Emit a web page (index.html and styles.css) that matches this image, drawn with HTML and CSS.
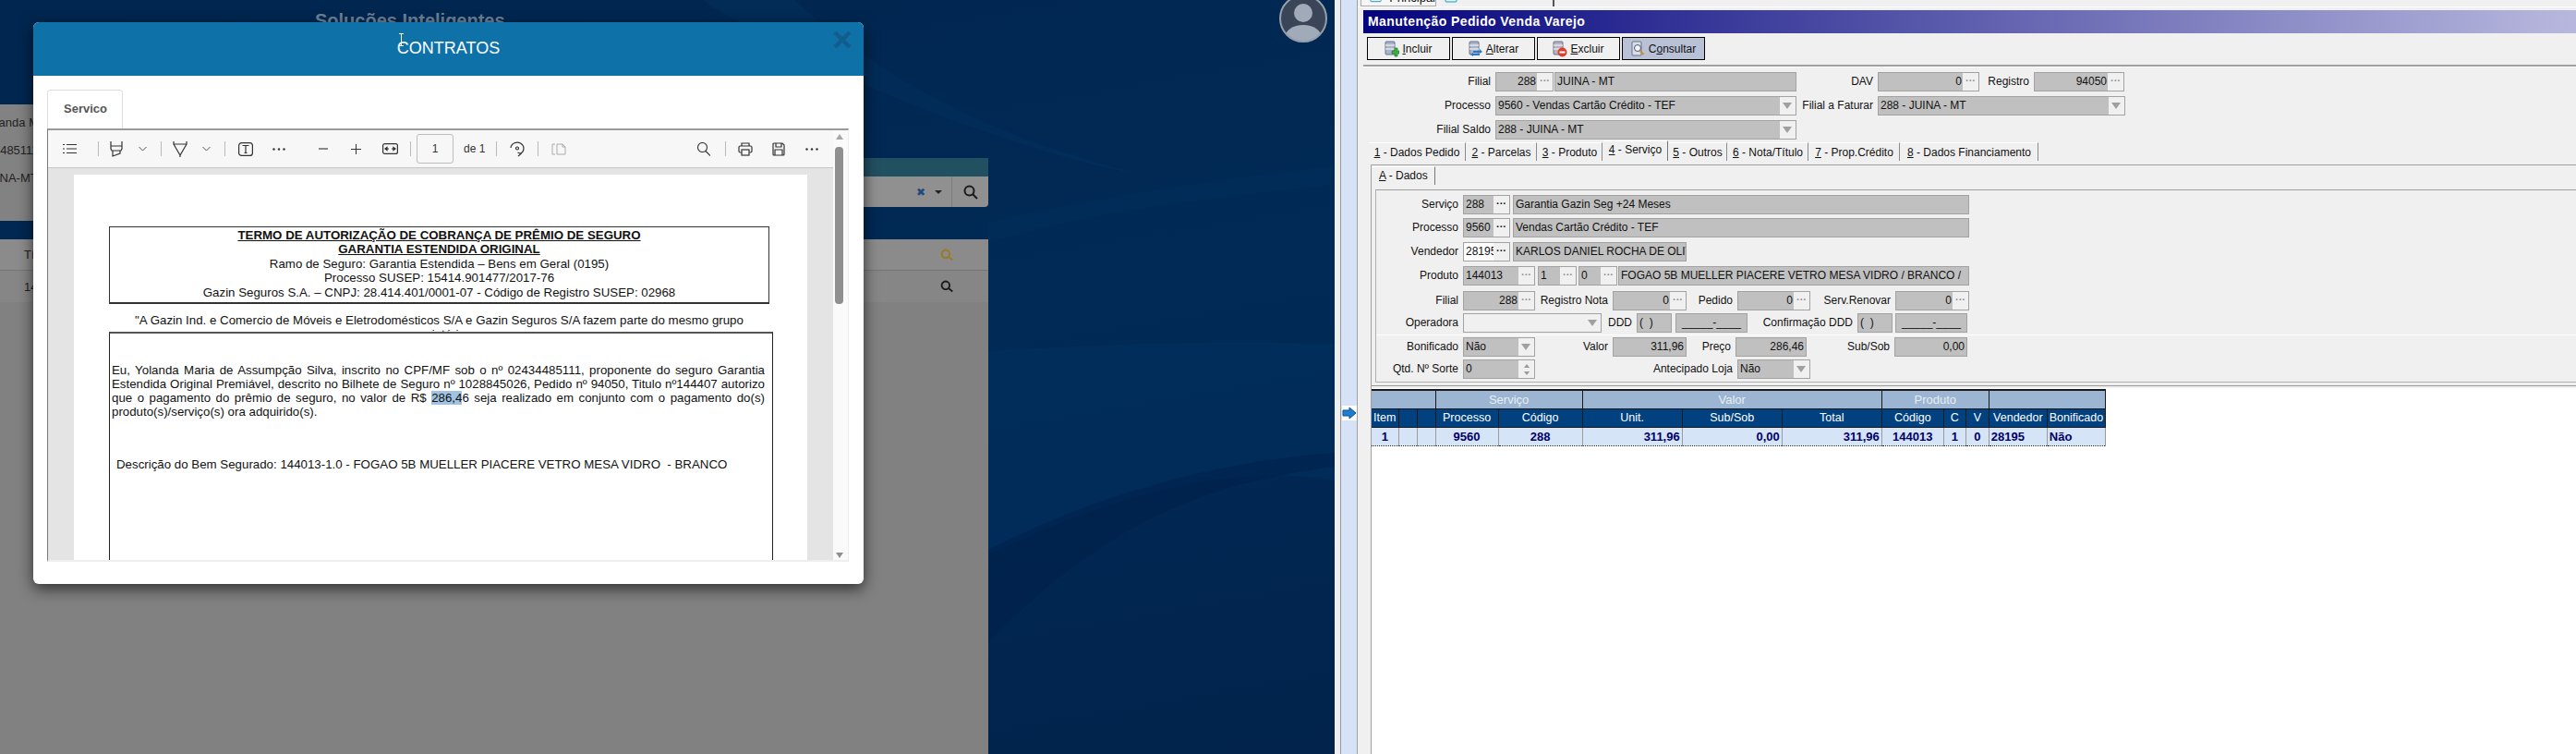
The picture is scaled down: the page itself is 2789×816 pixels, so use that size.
FILE: index.html
```html
<!DOCTYPE html>
<html>
  <head>
    <title>Manutenção Pedido Venda Varejo</title>
    <link rel="stylesheet" href="styles.css">
  </head>
  <body>
    <!-- Left side: web portal, dimmed behind the modal -->
    <main class="portal">
      <svg class="wallpaper" viewBox="0 0 1445 816" preserveAspectRatio="none">
        <path d="M760 0 C900 90 1120 170 1240 190 C1080 150 960 90 860 0 Z" fill="#0a3a6c" opacity="0.2" />
        <path d="M1070 240 C1180 215 1300 195 1445 180 L1445 200 C1300 215 1180 230 1070 262 Z" fill="#0a3a6c" opacity="0.15" />
        <path d="M1070 380 C1200 372 1320 368 1445 372 L1445 520 C1320 500 1200 540 1070 600 Z" fill="#053c70" opacity="0.22" />
        <path d="M1070 595 C1200 530 1320 500 1445 490 L1445 505 C1320 520 1200 560 1070 695 Z" fill="#001f45" opacity="0.4" />
      </svg>
      <header class="top-bar">
        <div class="brand">Soluções Inteligentes</div>
        <svg class="avatar" width="54" height="54" viewBox="0 0 54 54">
          <clipPath id="avatar-clip"><circle cx="27" cy="27" r="25" /></clipPath>
          <circle cx="27" cy="27" r="25" fill="#3a4557" />
          <g clip-path="url(#avatar-clip)" fill="#a0aab8">
            <circle cx="27" cy="21" r="10" />
            <ellipse cx="27" cy="48" rx="20" ry="14" />
          </g>
          <circle cx="27" cy="27" r="25" fill="none" stroke="#949fad" stroke-width="2" />
        </svg>
      </header>
      <div class="portal-content">
        <section class="search-row">
          <div class="info-panel">
            <div class="info-line name-line">Yolanda Maria</div>
            <div class="info-line cpf-line">02434485111</div>
            <div class="info-line city-line">JUINA-MT</div>
          </div>
          <div class="search-col">
            <div class="teal-bar"></div>
            <div class="search-bar">
              <span class="clear-x">✖</span>
              <span class="caret"></span>
              <span class="search-btn">
                <svg width="18" height="18" viewBox="0 0 18 18" fill="none" stroke="#1a1a1a" stroke-width="2"><circle cx="7.5" cy="7.5" r="5" /><path d="M11 11l5 5" /></svg>
              </span>
            </div>
          </div>
        </section>
        <section class="contract-table">
          <div class="contract-row">
            <span>Título</span>
            <svg width="14" height="14" viewBox="0 0 18 18" fill="none" stroke="#9a7a20" stroke-width="2.4"><circle cx="7.5" cy="7.5" r="5.5" /><path d="M11 11l6 5" /></svg>
          </div>
          <div class="contract-row">
            <span>144407</span>
            <svg width="14" height="14" viewBox="0 0 18 18" fill="none" stroke="#1a1a1a" stroke-width="2.4"><circle cx="7.5" cy="7.5" r="5.5" /><path d="M11 11l6 5" /></svg>
          </div>
        </section>
      </div>
    </main>

    <!-- Right side: desktop application window -->
    <aside class="app">
      <div class="app-edge"></div>
      <div class="nav-strip">
        <span class="nav-arrow">
          <svg width="16" height="14" viewBox="0 0 16 14"><path d="M1 4h7V1l7 6-7 6V10H1z" fill="#1c7fd0" stroke="#0c4f96" /></svg>
        </span>
      </div>
      <div class="app-body">
        <div class="win-tabs">
          <div class="win-tab win-tab-first">
            <svg width="14" height="12" viewBox="0 0 14 12"><rect x="1" y="1" width="12" height="10" rx="1" fill="#e8f4fa" stroke="#2090b8" /></svg>
            Principal
          </div>
          <div class="win-tab win-tab-second">
            <svg width="14" height="12" viewBox="0 0 14 12"><rect x="1" y="1" width="12" height="10" rx="1" fill="#e8f4fa" stroke="#10a0b8" /></svg>
          </div>
        </div>
        <div class="title-bar">Manutenção Pedido Venda Varejo</div>

        <div class="actions">
          <button class="action">
            <svg width="16" height="18" viewBox="0 0 16 18"><rect x="1" y="1" width="10" height="14" rx="1" fill="#a9b4c8" stroke="#66728a" /><path d="M1 5h10M1 9h10" stroke="#fff" /><path d="M11 8v3H8v3h3v3h3v-3h2v-3h-2V8z" fill="#3cb043" stroke="#1e7a26" stroke-width="0.7" /></svg>
            <span><u>I</u>ncluir</span>
          </button>
          <button class="action">
            <svg width="16" height="18" viewBox="0 0 16 18"><rect x="1" y="1" width="10" height="14" rx="1" fill="#a9b4c8" stroke="#66728a" /><path d="M1 5h10M1 9h10" stroke="#fff" /><path d="M5 11h7V9l3 3-3 2v-1H5zM12 16H5v1l-3-2 3-2v1h7z" fill="#2a78c8" /></svg>
            <span><u>A</u>lterar</span>
          </button>
          <button class="action">
            <svg width="16" height="18" viewBox="0 0 16 18"><rect x="1" y="1" width="10" height="14" rx="1" fill="#b6b4c2" stroke="#6f7088" /><path d="M1 5h10M1 9h10" stroke="#fff" /><circle cx="10.5" cy="12.5" r="5" fill="#d8402c" /><rect x="7.5" y="11.5" width="6" height="2" fill="#fff" /></svg>
            <span><u>E</u>xcluir</span>
          </button>
          <button class="action action-active">
            <svg width="16" height="18" viewBox="0 0 16 18"><rect x="1" y="1" width="10" height="15" rx="1" fill="#d8dde6" stroke="#66728a" /><circle cx="7" cy="8" r="3.5" fill="#eef4fa" stroke="#556" /><path d="M9.5 11l4 4" stroke="#c89030" stroke-width="2" /></svg>
            <span>C<u>o</u>nsultar</span>
          </button>
        </div>
        <div class="rule"></div>

        <form class="head-form">
          <div class="form-row">
            <label class="lbl w142">Filial</label>
            <div class="field lookup num w63"><span>288</span><i class="dots">···</i></div>
            <div class="field w262 ml1">JUINA - MT</div>
            <label class="lbl w88">DAV</label>
            <div class="field lookup num w110"><span>0</span><i class="dots">···</i></div>
            <label class="lbl w59">Registro</label>
            <div class="field lookup num w98"><span>94050</span><i class="dots">···</i></div>
          </div>
          <div class="form-row">
            <label class="lbl w142">Processo</label>
            <div class="field combo w326"><span>9560 - Vendas Cartão Crédito - TEF</span><i class="drop"></i></div>
            <label class="lbl w88">Filial a Faturar</label>
            <div class="field combo w268"><span>288 - JUINA - MT</span><i class="drop"></i></div>
          </div>
          <div class="form-row">
            <label class="lbl w142">Filial Saldo</label>
            <div class="field combo w326"><span>288 - JUINA - MT</span><i class="drop"></i></div>
          </div>
        </form>

        <div class="page-tabs">
          <div class="page-tab tab1"><u>1</u> - Dados Pedido</div>
          <div class="page-tab tab2"><u>2</u> - Parcelas</div>
          <div class="page-tab tab3"><u>3</u> - Produto</div>
          <div class="page-tab tab4 page-tab-active"><u>4</u> - Serviço</div>
          <div class="page-tab tab5"><u>5</u> - Outros</div>
          <div class="page-tab tab6"><u>6</u> - Nota/Título</div>
          <div class="page-tab tab7"><u>7</u> - Prop.Crédito</div>
          <div class="page-tab tab8"><u>8</u> - Dados Financiamento</div>
        </div>

        <div class="tab-page">
          <div class="sub-tab"><u>A</u> - Dados</div>
          <div class="data-box">
            <div class="service-rows">
              <div class="form-row">
                <label class="lbl w94">Serviço</label>
                <div class="field lookup w51"><span>288</span><i class="dots dots-on">···</i></div>
                <div class="field w494 ml3">Garantia Gazin Seg +24 Meses</div>
              </div>
              <div class="form-row">
                <label class="lbl w94">Processo</label>
                <div class="field lookup w51"><span>9560</span><i class="dots dots-on">···</i></div>
                <div class="field w494 ml3">Vendas Cartão Crédito - TEF</div>
              </div>
              <div class="form-row">
                <label class="lbl w94">Vendedor</label>
                <div class="field lookup field-white w51"><span>28195</span><i class="dots dots-on">···</i></div>
                <div class="field w188 ml3">KARLOS DANIEL ROCHA DE OLIVEIRA</div>
              </div>
              <div class="form-row">
                <label class="lbl w94">Produto</label>
                <div class="field lookup w78"><span>144013</span><i class="dots">···</i></div>
                <div class="field lookup w42 ml3"><span>1</span><i class="dots">···</i></div>
                <div class="field lookup w42 ml2"><span>0</span><i class="dots">···</i></div>
                <div class="field w380 ml1">FOGAO 5B MUELLER PIACERE VETRO MESA VIDRO / BRANCO /</div>
              </div>
              <div class="form-row">
                <label class="lbl w94">Filial</label>
                <div class="field lookup num w78"><span>288</span><i class="dots">···</i></div>
                <label class="lbl w84">Registro Nota</label>
                <div class="field lookup num w80"><span>0</span><i class="dots">···</i></div>
                <label class="lbl w55">Pedido</label>
                <div class="field lookup num w79"><span>0</span><i class="dots">···</i></div>
                <label class="lbl w92">Serv.Renovar</label>
                <div class="field lookup num w80"><span>0</span><i class="dots">···</i></div>
              </div>
              <div class="form-row">
                <label class="lbl w94">Operadora</label>
                <div class="field combo field-plain w150"><span></span><i class="drop"></i></div>
                <label class="lbl w38">DDD</label>
                <div class="field w38">( &nbsp;)</div>
                <div class="field mask w78 ml4">_____-____</div>
                <label class="lbl w119">Confirmação DDD</label>
                <div class="field w38">( &nbsp;)</div>
                <div class="field mask w78 ml3">_____-____</div>
              </div>
            </div>
            <div class="value-rows">
              <div class="form-row">
                <label class="lbl w94">Bonificado</label>
                <div class="field combo w78"><span>Não</span><i class="drop"></i></div>
                <label class="lbl w84">Valor</label>
                <div class="field num w80">311,96</div>
                <label class="lbl w53">Preço</label>
                <div class="field num w77">286,46</div>
                <label class="lbl w95">Sub/Sob</label>
                <div class="field num w79">0,00</div>
              </div>
              <div class="form-row">
                <label class="lbl w94">Qtd. Nº Sorte</label>
                <div class="field spin w78"><span>0</span><i class="spin-btn"><b class="up"></b><b class="down"></b></i></div>
                <label class="lbl w219">Antecipado Loja</label>
                <div class="field combo w79"><span>Não</span><i class="drop"></i></div>
              </div>
            </div>
          </div>
          <div class="box-gap"></div>

          <div class="grid-area">
            <table class="items">
              <colgroup>
                <col class="c29"><col class="c20"><col class="c20"><col class="c68"><col class="c91"><col class="c108"><col class="c108"><col class="c108"><col class="c67"><col class="c24"><col class="c25"><col class="c63"><col class="c63">
              </colgroup>
              <thead>
                <tr class="band">
                  <th colspan="3"></th><th colspan="2">Serviço</th><th colspan="3">Valor</th><th colspan="3">Produto</th><th colspan="2"></th>
                </tr>
                <tr class="heads">
                  <th>Item</th><th></th><th></th><th>Processo</th><th>Código</th><th>Unit.</th><th>Sub/Sob</th><th>Total</th><th>Código</th><th>C</th><th>V</th><th>Vendedor</th><th>Bonificado</th>
                </tr>
              </thead>
              <tbody>
                <tr>
                  <td>1</td><td></td><td></td><td>9560</td><td>288</td><td class="r">311,96</td><td class="r">0,00</td><td class="r">311,96</td><td>144013</td><td>1</td><td>0</td><td class="l">28195</td><td class="l">Não</td>
                </tr>
              </tbody>
            </table>
          </div>
        </div>
      </div>
    </aside>

    <!-- Contract modal -->
    <div class="modal">
      <div class="modal-head">
        <h2>CONTRATOS</h2>
        <svg class="cursor" width="7" height="14" viewBox="0 0 7 14" fill="none" stroke="#f4f4f4"><path d="M1 .5h5M3.500 .5v13M1 13.500h5" /></svg>
        <svg class="modal-close" width="20" height="20" viewBox="0 0 20 20"><path d="M2 2l16 16M18 2L2 18" stroke="#115d8b" stroke-width="4.500" /></svg>
      </div>
      <div class="modal-body">
        <div class="modal-tab">Servico</div>
        <div class="pdf-frame">
          <div class="pdf-main">
            <div class="pdf-toolbar">
              <svg class="ti m15" width="16" height="12" viewBox="0 0 16 12" fill="none" stroke="#333"><path d="M5 1.500h11M5 6h11M5 10.500h11M1 1.500h2M1 6h2M1 10.500h2" /></svg>
              <i class="sep m23"></i>
              <svg class="ti m12" width="14" height="18" viewBox="0 0 14 18" fill="none" stroke="#333" stroke-width="1.200"><path d="M1 1v5h12V1M1 6v3l1 2h10l1-2V6M3 11v6l8-3v-3" /></svg>
              <svg class="ti m17" width="9" height="6" viewBox="0 0 9 6" fill="none" stroke="#555"><path d="M.5 1l4 4 4-4" /></svg>
              <i class="sep m15"></i>
              <svg class="ti m12" width="16" height="18" viewBox="0 0 16 18" fill="none" stroke="#333" stroke-width="1.200"><path d="M1 1v3h14V1M1 4l7 12 7-12M8 16v2" /></svg>
              <svg class="ti m16" width="9" height="6" viewBox="0 0 9 6" fill="none" stroke="#555"><path d="M.5 1l4 4 4-4" /></svg>
              <i class="sep m15"></i>
              <svg class="ti m14" width="16" height="15" viewBox="0 0 16 15" fill="none" stroke="#333" stroke-width="1.200"><rect x=".6" y=".6" width="14.800" height="13.800" rx="3" /><path d="M4.500 3.500h7M8 3.500v8M6.500 11.500h3" /></svg>
              <svg class="ti m21" width="14" height="3" viewBox="0 0 14 3" fill="#333"><circle cx="1.500" cy="1.500" r="1.200" /><circle cx="7" cy="1.500" r="1.200" /><circle cx="12.500" cy="1.500" r="1.200" /></svg>
              <svg class="ti m36" width="10" height="2" viewBox="0 0 10 2" fill="#888"><rect width="10" height="2" /></svg>
              <svg class="ti m25" width="11" height="11" viewBox="0 0 11 11" stroke="#333"><path d="M0 5.500h11M5.500 0v11" /></svg>
              <svg class="ti m23" width="17" height="12" viewBox="0 0 17 12" fill="none" stroke="#333" stroke-width="1.200"><rect x=".6" y=".6" width="15.800" height="10.800" rx="2" /><path d="M3 6h4M10 6h4" /><path d="M3 6l2-1.500v3zM14 6l-2-1.500v3z" fill="#333" /></svg>
              <i class="sep m13"></i>
              <div class="page-input m6">1</div>
              <span class="page-total m11">de 1</span>
              <i class="sep m14"></i>
              <svg class="ti m14" width="16" height="17" viewBox="0 0 16 17" fill="none" stroke="#333" stroke-width="1.200"><path d="M1 7a7 6.500 0 1 1 10 6.500M9 16l3-2.500-3.500-1.500" /><circle cx="8" cy="7.500" r="1.500" /></svg>
              <i class="sep m14"></i>
              <svg class="ti m14" width="16" height="13" viewBox="0 0 16 13" fill="none" stroke="#aaa"><path d="M1 1h3M1 12h3M1 1v11M6 1h6l3 3v8H6zM12 1v3h3" /></svg>
              <svg class="ti m-auto" width="14" height="15" viewBox="0 0 14 15" fill="none" stroke="#333" stroke-width="1.100"><circle cx="5.500" cy="5.500" r="5" /><path d="M9 9.500l5 5" /></svg>
              <i class="sep m16"></i>
              <svg class="ti m13" width="16" height="15" viewBox="0 0 16 15" fill="none" stroke="#333" stroke-width="1.200"><path d="M4 4V1h8v3M4 11H2.500A1.500 1.500 0 0 1 1 9.500v-4A1.500 1.500 0 0 1 2.500 4h11A1.500 1.500 0 0 1 15 5.500v4a1.500 1.500 0 0 1-1.500 1.500H12" /><rect x="4" y="8" width="8" height="6" /></svg>
              <svg class="ti m21" width="14" height="15" viewBox="0 0 14 15" fill="none" stroke="#333" stroke-width="1.200"><path d="M1 2a1 1 0 0 1 1-1h9l2 2v10a1 1 0 0 1-1 1H2a1 1 0 0 1-1-1z" /><path d="M4 1v4h6V1M3 14V8h8v6" /></svg>
              <svg class="ti m22" width="14" height="3" viewBox="0 0 14 3" fill="#333"><circle cx="1.500" cy="1.500" r="1.200" /><circle cx="7" cy="1.500" r="1.200" /><circle cx="12.500" cy="1.500" r="1.200" /></svg>
            </div>
            <div class="pdf-viewer">
              <div class="pdf-page">
                <div class="doc-title">
                  <div class="strong">TERMO DE AUTORIZAÇÃO DE COBRANÇA DE PRÊMIO DE SEGURO</div>
                  <div class="strong">GARANTIA ESTENDIDA ORIGINAL</div>
                  <div>Ramo de Seguro: Garantia Estendida – Bens em Geral (0195)</div>
                  <div>Processo SUSEP: 15414.901477/2017-76</div>
                  <div>Gazin Seguros S.A. – CNPJ: 28.414.401/0001-07 - Código de Registro SUSEP: 02968</div>
                </div>
                <p class="doc-note">"A Gazin Ind. e Comercio de Móveis e Eletrodomésticos S/A e Gazin Seguros S/A fazem parte do mesmo grupo societário</p>
                <div class="doc-box">
                  <div class="doc-text">
                    <span class="just">Eu, Yolanda Maria de Assumpção Silva, inscrito no CPF/MF sob o nº 02434485111, proponente do seguro Garantia</span>
                    <span class="just">Estendida Original Premiável, descrito no Bilhete de Seguro nº 1028845026, Pedido nº 94050, Titulo nº144407 autorizo</span>
                    <span class="just">que o pagamento do prêmio de seguro, no valor de R$ <mark>286,4</mark>6 seja realizado em conjunto com o pagamento do(s)</span>
                    <span class="line">produto(s)/serviço(s) ora adquirido(s).</span>
                  </div>
                  <div class="doc-item">Descrição do Bem Segurado: 144013-1.0 - FOGAO 5B MUELLER PIACERE VETRO MESA VIDRO &nbsp;- BRANCO</div>
                </div>
              </div>
            </div>
          </div>
          <div class="pdf-scroll">
            <i class="arrow-up"></i>
            <i class="thumb"></i>
            <i class="arrow-down"></i>
          </div>
        </div>
      </div>
    </div>
  </body>
</html>
```

FILE: styles.css
```css
* {
  box-sizing: border-box;
}
html,
body {
  margin: 0;
  height: 816px;
  overflow: hidden;
}
body {
  display: flex;
  width: 2789px;
  font-family: "Liberation Sans", Arial, sans-serif;
  font-size: 12px;
  color: #111;
}

/* portal */
.portal {
  position: relative;
  width: 1445px;
  height: 816px;
  overflow: hidden;
  background: linear-gradient(170deg, #01264f 0%, #012a56 50%, #01234c 100%);
}
.wallpaper {
  position: absolute;
  left: 0;
  top: 0;
  width: 1445px;
  height: 816px;
}
.top-bar {
  position: relative;
  display: flex;
  height: 113px;
}
.brand {
  margin: 11px 0 0 341px;
  font-size: 20px;
  font-weight: bold;
  color: #6c8095;
  white-space: nowrap;
}
.avatar {
  margin: -7px 7px 0 auto;
}
.portal-content {
  position: relative;
  width: 1070px;
}
.search-row {
  display: flex;
  height: 126px;
}
.info-panel {
  width: 500px;
  padding-top: 12px;
  background: #828282;
  font-size: 13px;
  color: #222;
}
.info-line {
  height: 30px;
  line-height: 16px;
  white-space: nowrap;
}
.name-line {
  margin-left: -19px;
}
.cpf-line {
  margin-left: -36px;
}
.city-line {
  margin-left: -20px;
}
.search-col {
  width: 570px;
  padding-top: 58px;
}
.teal-bar {
  height: 20px;
  background: #215060;
}
.search-bar {
  display: flex;
  align-items: center;
  justify-content: flex-end;
  height: 33px;
  background: #909090;
  border-radius: 0 0 4px 4px;
}
.clear-x {
  margin-right: 10px;
  font-size: 12px;
  color: #1d4a78;
}
.caret {
  width: 0;
  height: 0;
  margin-right: 10px;
  border: 4px solid transparent;
  border-top-color: #222;
  border-bottom: 0;
}
.search-btn {
  display: flex;
  align-items: center;
  justify-content: center;
  width: 40px;
  height: 33px;
  border-left: 1px solid #7c7c7c;
}
.contract-table {
  height: 557px;
  margin-top: 20px;
  background: #818181;
  border-radius: 4px 4px 0 0;
}
.contract-row {
  display: flex;
  align-items: center;
  justify-content: space-between;
  height: 34px;
  padding: 0 38px 0 26px;
  background: #8b8b8b;
  border-bottom: 1px solid #757575;
  font-size: 13px;
  color: #222;
}
.contract-row:last-child {
  background: #868686;
  border-bottom: 0;
}

/* application window */
.app {
  display: flex;
  width: 1344px;
  height: 816px;
  overflow: hidden;
}
.app-edge {
  width: 7px;
  background: #efefef;
  border-right: 1px solid #9a9a9a;
}
.nav-strip {
  width: 17px;
  padding-top: 439px;
  background: #d6e3f6;
}
.nav-arrow {
  display: flex;
  align-items: center;
  justify-content: center;
  width: 16px;
  height: 16px;
  margin-left: 1px;
  background: #fff;
}
.app-body {
  flex: 1;
  min-width: 0;
  background: #f0f0f0;
  border-left: 1px solid #a0a0a0;
}
.win-tabs {
  display: flex;
  height: 8px;
  padding-left: 3px;
  overflow: hidden;
  border-bottom: 1px solid #fff;
}
.win-tab {
  display: flex;
  align-items: center;
  gap: 8px;
  height: 20px;
  margin-top: -13px;
  padding-left: 9px;
  font-size: 13px;
}
.win-tab-first {
  width: 82px;
  border: 1px solid #a8a8a8;
  background: #f6f6f6;
}
.win-tab-second {
  width: 128px;
  border-right: 2px solid #555;
}
.title-bar {
  height: 25px;
  margin: 3px 0 0 6px;
  padding-left: 5px;
  background: linear-gradient(90deg, #04047e, #b8b8de);
  font-size: 14px;
  font-weight: bold;
  line-height: 25px;
  color: #fff;
  letter-spacing: 0.4px;
}
.actions {
  display: flex;
  gap: 2px;
  margin: 4px 0 0 10px;
}
.action {
  display: flex;
  align-items: center;
  justify-content: center;
  gap: 3px;
  width: 90px;
  height: 25px;
  padding: 0;
  border: 1px solid #000;
  background: #f0f0f0;
  font-family: inherit;
  font-size: 12px;
  color: #111;
}
.action-active {
  background: #b9c1d6;
}
.rule {
  height: 3px;
  margin: 5px 0 0 6px;
  border-top: 2px solid #a0a0a0;
  border-bottom: 1px solid #fff;
}

/* form fields */
.head-form {
  margin-top: 5px;
  padding-left: 7px;
}
.form-row {
  display: flex;
  height: 21px;
  margin-bottom: 5px;
}
.lbl {
  flex: none;
  padding: 2px 5px 0 0;
  line-height: 17px;
  text-align: right;
  white-space: nowrap;
}
.field {
  display: flex;
  flex: none;
  align-items: center;
  height: 21px;
  padding-left: 2px;
  overflow: hidden;
  background: #c0c0c0;
  border: 1px solid #a2a2a2;
  line-height: 17px;
  white-space: nowrap;
}
.field-white {
  background: #fff;
}
.field-plain {
  background: #f0f0f0;
}
.field > span {
  flex: 1;
  min-width: 0;
  overflow: hidden;
}
.num {
  justify-content: flex-end;
  padding-right: 2px;
}
.lookup {
  padding-right: 0;
}
.lookup.num span {
  padding-right: 1px;
  text-align: right;
}
.dots {
  flex: none;
  width: 17px;
  height: 19px;
  background: #f0f0f0;
  font-style: normal;
  font-size: 11px;
  font-weight: bold;
  line-height: 17px;
  text-align: center;
  color: #8e8e8e;
}
.dots-on {
  color: #111;
}
.combo,
.spin {
  padding-right: 0;
}
.drop {
  position: relative;
  flex: none;
  width: 17px;
  height: 19px;
  background: #f0f0f0;
}
.drop::after {
  content: "";
  position: absolute;
  left: 3px;
  top: 6px;
  border: 5px solid transparent;
  border-top: 7px solid #a0a0a0;
  border-bottom: 0;
}
.spin-btn {
  display: flex;
  flex: none;
  flex-direction: column;
  justify-content: center;
  align-items: center;
  gap: 4px;
  width: 17px;
  height: 19px;
  background: #f0f0f0;
}
.up,
.down {
  width: 0;
  height: 0;
  border: 3px solid transparent;
}
.up {
  border-bottom: 4px solid #9a9a9a;
  border-top: 0;
}
.down {
  border-top: 4px solid #9a9a9a;
  border-bottom: 0;
}
.mask {
  justify-content: center;
  padding-left: 0;
}
.w38 { width: 38px; }
.w42 { width: 42px; }
.w51 { width: 51px; }
.w53 { width: 53px; }
.w55 { width: 55px; }
.w59 { width: 59px; }
.w63 { width: 63px; }
.w77 { width: 77px; }
.w78 { width: 78px; }
.w79 { width: 79px; }
.w80 { width: 80px; }
.w84 { width: 84px; }
.w88 { width: 88px; }
.w92 { width: 92px; }
.w94 { width: 94px; }
.w95 { width: 95px; }
.w98 { width: 98px; }
.w110 { width: 110px; }
.w119 { width: 119px; }
.w142 { width: 142px; }
.w150 { width: 150px; }
.w188 { width: 188px; }
.w219 { width: 219px; }
.w262 { width: 262px; }
.w268 { width: 268px; }
.w326 { width: 326px; }
.w380 { width: 380px; }
.w494 { width: 494px; }
.ml1 { margin-left: 1px; }
.ml2 { margin-left: 2px; }
.ml3 { margin-left: 3px; }
.ml4 { margin-left: 4px; }

/* page tabs */
.page-tabs {
  display: flex;
  align-items: flex-end;
  gap: 1px;
  height: 22px;
  margin-top: -4px;
  padding-left: 12px;
}
.page-tab {
  flex: none;
  height: 20px;
  background: #f0f0f0;
  border-top: 1px solid #fff;
  border-right: 1px solid #8c8c8c;
  line-height: 20px;
  text-align: center;
  white-space: nowrap;
}
.page-tab-active {
  height: 22px;
  line-height: 18px;
  border-right-color: #777;
}
.tab1 { width: 105px; }
.tab2 { width: 76px; }
.tab3 { width: 70px; }
.tab4 { width: 70px; }
.tab5 { width: 63px; }
.tab6 { width: 87px; }
.tab7 { width: 98px; }
.tab8 { width: 149px; }
.tab-page {
  height: 638px;
  margin: 4px 0 0 14px;
  background: #f0f0f0;
  border-top: 1px solid #a0a0a0;
  border-left: 1px solid #a0a0a0;
}
.sub-tab {
  width: 68px;
  height: 20px;
  margin: 1px 0 0 1px;
  padding-left: 7px;
  border-top: 1px solid #fff;
  border-right: 1px solid #777;
  line-height: 19px;
}
.data-box {
  height: 209px;
  margin: 5px 0 0 4px;
  border-top: 1px solid #a0a0a0;
  border-left: 1px solid #b0b0b0;
  border-bottom: 1px solid #b0b0b0;
}
.service-rows {
  height: 156px;
  padding-top: 5px;
}
.service-rows .form-row:nth-child(1) {
  margin-bottom: 4px;
}
.service-rows .form-row:nth-child(4) {
  margin-bottom: 6px;
}
.service-rows .form-row:nth-child(5) {
  margin-bottom: 3px;
}
.value-rows {
  padding-top: 2px;
  border-top: 1px solid #fff;
}
.value-rows .form-row {
  margin-bottom: 3px;
}
.box-gap {
  height: 6px;
  box-shadow: inset 0 -2px 0 #f0f0f0, inset 0 -3px 0 #9a9a9a;
}

/* grid */
.grid-area {
  height: 400px;
  padding-top: 1px;
  background: #fff;
}
.items {
  width: 795px;
  border-collapse: collapse;
  table-layout: fixed;
  font-size: 13px;
}
.c20 { width: 20px; }
.c24 { width: 24px; }
.c25 { width: 25px; }
.c29 { width: 29px; }
.c63 { width: 63px; }
.c67 { width: 67px; }
.c68 { width: 68px; }
.c91 { width: 91px; }
.c108 { width: 108px; }
.items th {
  padding: 0;
  font-weight: normal;
  border-right: 1px solid #1a1a1a;
  border-bottom: 1px solid #1a1a1a;
  white-space: nowrap;
}
.band th {
  height: 20px;
  background: #9cb5d2;
  color: #e6edf5;
  border-top: 2px solid #1a1a1a;
}
.heads th {
  height: 20px;
  background: #01417f;
  color: #fff;
  font-size: 12.500px;
}
.items td {
  height: 20px;
  padding: 0 2px;
  background: #d6e4f8;
  border-top: 1px dotted #222;
  border-bottom: 1px dotted #222;
  border-right: 1px solid #9a9a9a;
  color: #000066;
  font-weight: bold;
  text-align: center;
  white-space: nowrap;
}
.items td.r {
  text-align: right;
}
.items td.l {
  text-align: left;
}

/* modal */
.modal {
  position: absolute;
  left: 36px;
  top: 24px;
  width: 899px;
  height: 608px;
  background: #fff;
  border-radius: 6px;
  box-shadow: 0 5px 16px rgba(0, 0, 0, 0.65);
}
.modal-head {
  position: relative;
  display: flex;
  align-items: center;
  justify-content: center;
  height: 58px;
  padding-bottom: 2px;
  background: #0e72a8;
  border-radius: 6px 6px 0 0;
}
.modal-head h2 {
  margin: 0;
  font-size: 18px;
  font-weight: normal;
  color: #fff;
}
.cursor {
  position: absolute;
  left: 395px;
  top: 12px;
}
.modal-close {
  position: absolute;
  right: 13px;
  top: 9px;
}
.modal-body {
  padding: 15px 16px 0 15px;
}
.modal-tab {
  width: 82px;
  height: 42px;
  padding-left: 17px;
  background: #fff;
  border: 1px solid #ddd;
  border-bottom: 0;
  border-radius: 4px 4px 0 0;
  font-size: 13px;
  font-weight: bold;
  line-height: 40px;
  color: #555;
}
.pdf-frame {
  display: flex;
  height: 469px;
  overflow: hidden;
  border-top: 2px solid #9a9a9a;
  border-left: 1px solid #7a7a7a;
  border-right: 1px solid #eee;
  border-bottom: 2px solid #eee;
}
.pdf-main {
  display: flex;
  flex: 1;
  flex-direction: column;
  min-width: 0;
}
.pdf-toolbar {
  display: flex;
  flex: none;
  align-items: center;
  height: 41px;
  padding-right: 16px;
  background: #f7f7f7;
  border-bottom: 1px solid #c6c6c6;
}
.ti {
  flex: none;
}
.sep {
  flex: none;
  width: 1px;
  height: 16px;
  background: #bbb;
}
.m6 { margin-left: 6px; }
.m11 { margin-left: 11px; }
.m12 { margin-left: 12px; }
.m13 { margin-left: 13px; }
.m14 { margin-left: 14px; }
.m15 { margin-left: 15px; }
.m16 { margin-left: 16px; }
.m17 { margin-left: 17px; }
.m21 { margin-left: 21px; }
.m22 { margin-left: 22px; }
.m23 { margin-left: 23px; }
.m25 { margin-left: 25px; }
.m36 { margin-left: 36px; }
.m-auto { margin-left: auto; }
.page-input {
  flex: none;
  width: 40px;
  height: 32px;
  border: 1px solid #bdbdbd;
  border-radius: 3px;
  line-height: 30px;
  text-align: center;
  color: #333;
}
.page-total {
  flex: none;
  width: 21px;
  white-space: nowrap;
  color: #333;
}
.pdf-viewer {
  flex: 1;
  min-height: 0;
  overflow: hidden;
  padding: 7px 28px 0;
  background: #e4e4e4;
}
.pdf-page {
  height: 500px;
  padding: 56px 0 0 38px;
  background: #fff;
  font-size: 13.300px;
  color: #111;
}
.doc-title {
  width: 715px;
  height: 84px;
  padding-top: 1px;
  border: 1px solid #333;
  border-bottom-width: 2px;
  line-height: 15.400px;
  text-align: center;
}
.strong {
  font-weight: bold;
  text-decoration: underline;
}
.doc-note {
  width: 715px;
  height: 20px;
  margin: 10px 0 0;
  padding: 0 24px;
  overflow: hidden;
  line-height: 15.400px;
  text-align: center;
}
.doc-box {
  width: 719px;
  height: 300px;
  padding: 32px 8px 0 2px;
  border-top: 2px solid #555;
  border-left: 1px solid #222;
  border-right: 1px solid #222;
  line-height: 15px;
}
.doc-text span {
  display: block;
}
.just {
  text-align: justify;
  text-align-last: justify;
}
mark {
  background: #9fc3e0;
  color: #111;
}
.doc-item {
  margin: 42px 0 0 5px;
  white-space: nowrap;
}
.pdf-scroll {
  position: relative;
  flex: none;
  width: 16px;
  background: #fafafa;
}
.thumb {
  position: absolute;
  left: 2px;
  top: 18px;
  width: 9px;
  height: 170px;
  background: #8f8f8f;
  border-radius: 4px;
}
.arrow-up,
.arrow-down {
  position: absolute;
  left: 3px;
  width: 0;
  height: 0;
  border: 4px solid transparent;
}
.arrow-up {
  top: 4px;
  border-bottom: 6px solid #a8a8a8;
  border-top: 0;
}
.arrow-down {
  bottom: 2px;
  border-top: 6px solid #8f8f8f;
  border-bottom: 0;
}
```
